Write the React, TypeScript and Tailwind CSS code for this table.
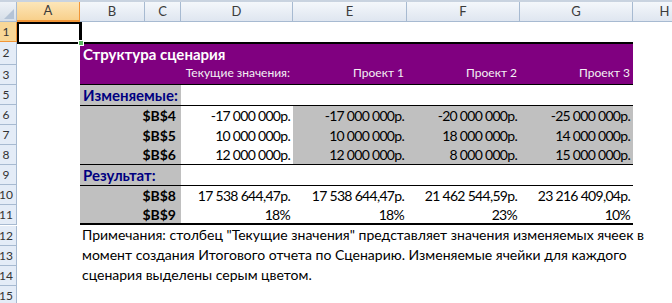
import React from "react";

const HEAD =
  "h-full shrink-0 flex items-center justify-center border-r border-b border-[#A7BAD1] bg-gradient-to-b from-[#F4F7FB] to-[#DFE6F0] text-[13px] text-[#3B3B3B]";

function RowHead({ n, active }: { n: string; active?: boolean }) {
  return (
    <div
      className={
        active
          ? "w-[17px] h-full shrink-0 border-r border-b border-[#F29536] bg-[#F8D797] text-[12px] text-[#333] relative overflow-hidden"
          : "w-[17px] h-full shrink-0 border-r border-b border-[#A7BAD1] bg-[#E4ECF7] text-[12px] text-[#333] relative overflow-hidden"
      }
    >
      <div className="absolute left-0 top-0 h-full w-[12px] flex items-center justify-center">
        {n}
      </div>
    </div>
  );
}

function A() {
  return <div className="w-[63px] h-full shrink-0" />;
}

function Label({ t }: { t: string }) {
  return (
    <div className="w-[101px] h-full shrink-0 flex items-center justify-end pr-[5px] font-bold bg-[#C0C0C0]">
      {t}
    </div>
  );
}

function Val({ w, t, grey }: { w: string; t: string; grey?: boolean }) {
  return (
    <div
      className={
        (grey ? "bg-[#C0C0C0] " : "") +
        w +
        " h-full shrink-0 flex items-center justify-end pr-[3px] whitespace-nowrap tracking-[-0.7px]"
      }
    >
      {t}
    </div>
  );
}

function HeadVal({ w, t }: { w: string; t: string }) {
  return (
    <div className={w + " h-full shrink-0 flex items-end justify-end pr-[3px] pb-[2px] whitespace-nowrap"}>
      {t}
    </div>
  );
}

function DataRow({
  n,
  label,
  vals,
  greyRest,
  wrap,
}: {
  n: string;
  label: string;
  vals: string[];
  greyRest?: boolean;
  wrap: string;
}) {
  return (
    <div className="flex h-[20px]">
      <RowHead n={n} />
      <A />
      <div className={"flex h-full " + wrap}>
        <Label t={label} />
        <Val w="w-[112px]" t={vals[0]} />
        <Val w="w-[114px]" t={vals[1]} grey={greyRest} />
        <Val w="w-[113px]" t={vals[2]} grey={greyRest} />
        <Val w="w-[113px]" t={vals[3]} grey={greyRest} />
      </div>
    </div>
  );
}

export default function App() {
  return (
    <div className="w-[672px] h-[303px] overflow-hidden bg-white font-['Lato','Open_Sans',sans-serif] text-[14px] text-black relative">
      {/* column headers */}
      <div className="flex h-[22px] border-t-2 border-[#C9D3E0]">
        <div className="w-[17px] h-full shrink-0 border-r border-b border-[#A7BAD1] bg-gradient-to-b from-[#EEF2F7] to-[#D6DEE8] relative">
          <svg className="absolute right-[2px] bottom-[2px]" width="10" height="10" viewBox="0 0 10 10">
            <polygon points="10,0 10,10 0,10" fill="#B4C3D6" />
          </svg>
        </div>
        <div className="w-[63px] h-full shrink-0 flex items-center justify-center border-r border-b-2 border-r-[#F29536] border-b-[#F29536] bg-gradient-to-b from-[#FCE6B9] to-[#F8D08B] text-[13px] text-[#3B3B3B]">
          A
        </div>
        <div className={HEAD + " w-[65px]"}>B</div>
        <div className={HEAD + " w-[36px]"}>C</div>
        <div className={HEAD + " w-[112px]"}>D</div>
        <div className={HEAD + " w-[114px]"}>E</div>
        <div className={HEAD + " w-[113px]"}>F</div>
        <div className={HEAD + " w-[113px]"}>G</div>
        <div className={HEAD + " w-[64px]"}>H</div>
      </div>

      {/* row 1 */}
      <div className="flex h-[20px]">
        <RowHead n="1" active />
        <A />
      </div>

      {/* row 2 */}
      <div className="flex h-[23px]">
        <RowHead n="2" />
        <A />
        <div className="w-[553px] h-full border-t-2 border-black bg-[#800080] flex items-center pl-[3px] text-white font-bold text-[15px]">
          Структура сценария
        </div>
      </div>

      {/* row 3 */}
      <div className="flex h-[20px]">
        <RowHead n="3" />
        <A />
        <div className="flex h-full border-b border-black bg-[#800080] text-[#F4F0F4] text-[12px]">
          <div className="w-[101px] h-full" />
          <HeadVal w="w-[112px]" t="Текущие значения:" />
          <HeadVal w="w-[114px]" t="Проект 1" />
          <HeadVal w="w-[113px]" t="Проект 2" />
          <HeadVal w="w-[113px]" t="Проект 3" />
        </div>
      </div>

      {/* row 5 */}
      <div className="flex h-[20px]">
        <RowHead n="5" />
        <A />
        <div className="w-[101px] h-full bg-[#C0C0C0] flex items-center pl-[3px] font-bold text-[15px] text-[#000080]">
          Изменяемые:
        </div>
      </div>

      <DataRow n="6" label="$B$4" vals={["-17 000 000р.", "-17 000 000р.", "-20 000 000р.", "-25 000 000р."]} greyRest wrap="border-t border-black" />
      <DataRow n="7" label="$B$5" vals={["10 000 000р.", "10 000 000р.", "18 000 000р.", "14 000 000р."]} greyRest wrap="" />
      <DataRow n="8" label="$B$6" vals={["12 000 000р.", "12 000 000р.", "8 000 000р.", "15 000 000р."]} greyRest wrap="border-b border-black" />

      {/* row 9 */}
      <div className="flex h-[20px]">
        <RowHead n="9" />
        <A />
        <div className="w-[101px] h-full bg-[#C0C0C0] flex items-center pl-[3px] font-bold text-[15px] text-[#000080]">
          Результат:
        </div>
      </div>

      <DataRow n="10" label="$B$8" vals={["17 538 644,47р.", "17 538 644,47р.", "21 462 544,59р.", "23 216 409,04р."]} wrap="border-t border-black" />
      <div className="h-[21px]">
        <DataRow n="11" label="$B$9" vals={["18%", "18%", "23%", "10%"]} wrap="border-b-2 border-black h-[21px]" />
      </div>

      {[
        ["12", "Примечания: столбец \"Текущие значения\" представляет значения изменяемых ячеек в"],
        ["13", "момент создания Итогового отчета по Сценарию. Изменяемые ячейки для каждого"],
        ["14", "сценария выделены серым цветом."],
        ["15", ""],
      ].map(([n, t]) => (
        <div key={n} className="flex h-[20px]">
          <RowHead n={n} />
          <A />
          <div className="h-full flex items-end pb-[1px] pl-[2px] whitespace-nowrap">{t}</div>
        </div>
      ))}

      {/* selection overlay on A1 */}
      <div className="absolute left-[17px] top-[22px] w-[65px] h-[22px] border-2 border-r-[3px] border-black pointer-events-none" />
      <div className="absolute left-[78px] top-[40px] w-[6px] h-[6px] bg-[#5DBB63] border border-white" />
    </div>
  );
}
